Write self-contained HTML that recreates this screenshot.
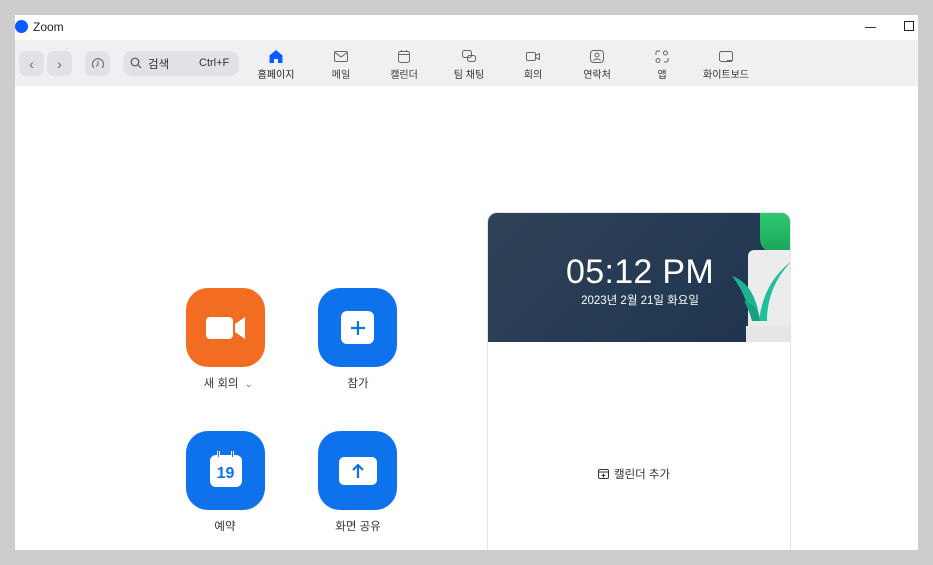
<!DOCTYPE html>
<html><head><meta charset="utf-8"><style>
*{margin:0;padding:0;box-sizing:border-box}
body{width:933px;height:565px;background:#cdcdcd;font-family:"Liberation Sans","Noto Sans CJK KR",sans-serif;position:relative;overflow:hidden}
.win{position:absolute;left:15px;top:15px;width:903px;height:535px;background:#fff;overflow:hidden}
.title{height:25px;position:relative;font-size:12px;color:#222}
.tb{position:absolute;top:25px;left:0;width:903px;height:46px;background:#f0f0f3}
.abs{position:absolute}
.btn{position:absolute;width:25px;height:25px;background:#e2e2e6;border-radius:7px;top:11px;display:flex;align-items:center;justify-content:center;color:#666;font-size:14px}
.nav{position:absolute;top:9px;text-align:center;font-size:10px;color:#333;width:60px}
.nav svg{display:block;margin:0 auto 2px}
.big{position:absolute;width:79px;height:79px;border-radius:22px;display:flex;align-items:center;justify-content:center}
.lbl{position:absolute;font-size:11.5px;color:#333;text-align:center;width:120px}
</style></head><body>
<div class="win">
 <div class="title">
  <div class="abs" style="left:0;top:5px;width:13px;height:13px;border-radius:50%;background:#0b5cff"></div>
  <div class="abs" style="left:18px;top:5px">Zoom</div>
  <div class="abs" style="left:850px;top:12px;width:11px;height:1px;background:#333"></div>
  <div class="abs" style="left:889px;top:6px;width:10px;height:10px;border:1px solid #222"></div>
 </div>
 <div class="tb">
  <div class="btn" style="left:4px">‹</div>
  <div class="btn" style="left:32px">›</div>
  <div class="btn" style="left:70px"><svg width="14" height="14" viewBox="0 0 14 14" fill="none" stroke="#777" stroke-width="1.2"><path d="M3 11A5.5 5.5 0 1 1 11 11M7 4v3.5l-2 2"/></svg></div>
  <div class="abs" style="left:108px;top:11px;width:116px;height:25px;background:#e2e2e6;border-radius:9px;font-size:11.5px;color:#333">
   <svg class="abs" style="left:7px;top:6px" width="12" height="12" viewBox="0 0 12 12" fill="none" stroke="#555" stroke-width="1.2"><circle cx="5" cy="5" r="3.8"/><path d="M8 8l3 3"/></svg>
   <span class="abs" style="left:25px;top:5px">검색</span><span class="abs" style="left:76px;top:6px;font-size:11px">Ctrl+F</span>
  </div>
  <div class="nav" style="left:231px;color:#222"><svg width="16" height="15" viewBox="0 0 16 15"><path d="M8 1L1.5 6.5V14h4.5v-4h4v4h4.5V6.5z" fill="#0b5cff"/></svg>홈페이지</div>
  <div class="nav" style="left:296px"><svg width="16" height="15" viewBox="0 0 16 15" fill="none" stroke="#666"><rect x="1.5" y="2.5" width="13" height="10" rx="1.5"/><path d="M2 3.5l6 4.5 6-4.5"/></svg>메일</div>
  <div class="nav" style="left:359px"><svg width="16" height="15" viewBox="0 0 16 15" fill="none" stroke="#666"><rect x="2.5" y="2.5" width="11" height="11" rx="2"/><path d="M2.5 5.5h11M5.5 1v2M10.5 1v2"/></svg>캘린더</div>
  <div class="nav" style="left:424px"><svg width="16" height="15" viewBox="0 0 16 15" fill="none" stroke="#666"><rect x="1.5" y="1.5" width="9" height="7" rx="2"/><rect x="6.5" y="6.5" width="8" height="6" rx="2"/></svg>팀 채팅</div>
  <div class="nav" style="left:488px"><svg width="16" height="15" viewBox="0 0 16 15" fill="none" stroke="#666"><rect x="1.5" y="3.5" width="9" height="8" rx="1.5"/><path d="M10.5 6.5l4-2v6l-4-2"/></svg>회의</div>
  <div class="nav" style="left:552px"><svg width="16" height="15" viewBox="0 0 16 15" fill="none" stroke="#666"><rect x="1.5" y="1.5" width="13" height="12" rx="3"/><circle cx="8" cy="6" r="2"/><path d="M4.5 11.5c1-2 6-2 7 0"/></svg>연락처</div>
  <div class="nav" style="left:617px"><svg width="16" height="15" viewBox="0 0 16 15" fill="none" stroke="#666"><path d="M2 6V3.5A1.5 1.5 0 0 1 3.5 2H6M10 13h2.5A1.5 1.5 0 0 0 14 11.5V9"/><circle cx="11.5" cy="4" r="2"/><circle cx="4" cy="11.5" r="2"/></svg>앱</div>
  <div class="nav" style="left:681px"><svg width="16" height="15" viewBox="0 0 16 15" fill="none" stroke="#666"><rect x="1.5" y="2.5" width="13" height="10" rx="2"/><path d="M9 12h5" stroke-width="2"/></svg>화이트보드</div>
 </div>

 <div class="big" style="left:171px;top:273px;background:#f26d21"><svg width="40" height="26" viewBox="0 0 40 26"><rect x="0" y="2" width="27" height="22" rx="4" fill="#fff"/><path d="M29 9l10-7v22l-10-7z" fill="#fff"/></svg></div>
 <div class="big" style="left:303px;top:273px;background:#0e72ed"><div style="width:33px;height:33px;background:#fff;border-radius:6px;display:flex;align-items:center;justify-content:center"><svg width="16" height="16"><path d="M8 1v14M1 8h14" stroke="#0e72ed" stroke-width="2.2"/></svg></div></div>
 <div class="big" style="left:171px;top:416px;background:#0e72ed"><div style="position:relative;width:32px;height:32px;background:#fff;border-radius:6px;color:#0e72ed;font-weight:bold;font-size:16px;text-align:center;line-height:38px">19<div class="abs" style="left:7px;top:-4px;width:3px;height:7px;border:1.5px solid #fff;border-top:none;border-radius:0 0 2px 2px;background:#0e72ed"></div><div class="abs" style="left:21px;top:-4px;width:3px;height:7px;border:1.5px solid #fff;border-top:none;border-radius:0 0 2px 2px;background:#0e72ed"></div></div></div>
 <div class="big" style="left:303px;top:416px;background:#0e72ed"><div style="width:38px;height:28px;background:#fff;border-radius:5px;display:flex;align-items:center;justify-content:center"><svg width="14" height="16"><path d="M7 15V2M2 7l5-5 5 5" stroke="#0e72ed" stroke-width="2.2" fill="none"/></svg></div></div>
 <div class="lbl" style="left:153px;top:360px">새 회의 &nbsp;<span style="font-size:9px;color:#666">⌄</span></div>
 <div class="lbl" style="left:283px;top:360px">참가</div>
 <div class="lbl" style="left:150px;top:503px">예약</div>
 <div class="lbl" style="left:283px;top:503px">화면 공유</div>

 <div class="abs" style="left:472px;top:197px;width:304px;height:360px;border:1px solid #e6e6e6;border-radius:10px;overflow:hidden">
  <div class="abs" style="left:0;top:0;width:304px;height:129px;background:linear-gradient(135deg,#2f4258,#243a52 60%,#1f344c)">
   <div class="abs" style="left:272px;top:0;width:32px;height:40px;background:linear-gradient(#2ecb6e,#1aa25a);border-radius:0 0 0 14px"></div>
   <div class="abs" style="left:260px;top:37px;width:44px;height:92px;background:#ececec;border-radius:6px 0 0 0"></div>
   <svg class="abs" style="left:234px;top:48px" width="70" height="60" viewBox="0 0 70 60"><path d="M10 15c15 5 25 20 28 45L30 60C25 40 20 28 10 15z" fill="#1db391"/><path d="M70 0C55 15 45 35 45 60h-8C40 35 50 15 70 0z" fill="#20c09a"/><path d="M22 40c10 2 14 10 16 20h-8c-2-8-5-14-8-20z" fill="#17a080"/></svg>
   <div class="abs" style="left:258px;top:113px;width:46px;height:16px;background:#e6e6e6"></div>
   <div class="abs" style="left:0;top:40px;width:304px;text-align:center;padding-left:0;color:#fff;font-size:34px;letter-spacing:0.3px">05:12 PM</div>
   <div class="abs" style="left:0;top:79px;width:304px;text-align:center;color:#fff;font-size:11.5px">2023년 2월 21일 화요일</div>
  </div>
  <div class="abs" style="left:110px;top:253px;font-size:11.5px;color:#333"><svg width="11" height="11" viewBox="0 0 11 11" fill="none" stroke="#333" style="vertical-align:-1px;margin-right:5px"><rect x="0.5" y="1.5" width="10" height="9" rx="1.5"/><path d="M0.5 4h10M5.5 5.5v4M3.5 7.5h4"/></svg>캘린더 추가</div>
 </div>
</div>
</body></html>
